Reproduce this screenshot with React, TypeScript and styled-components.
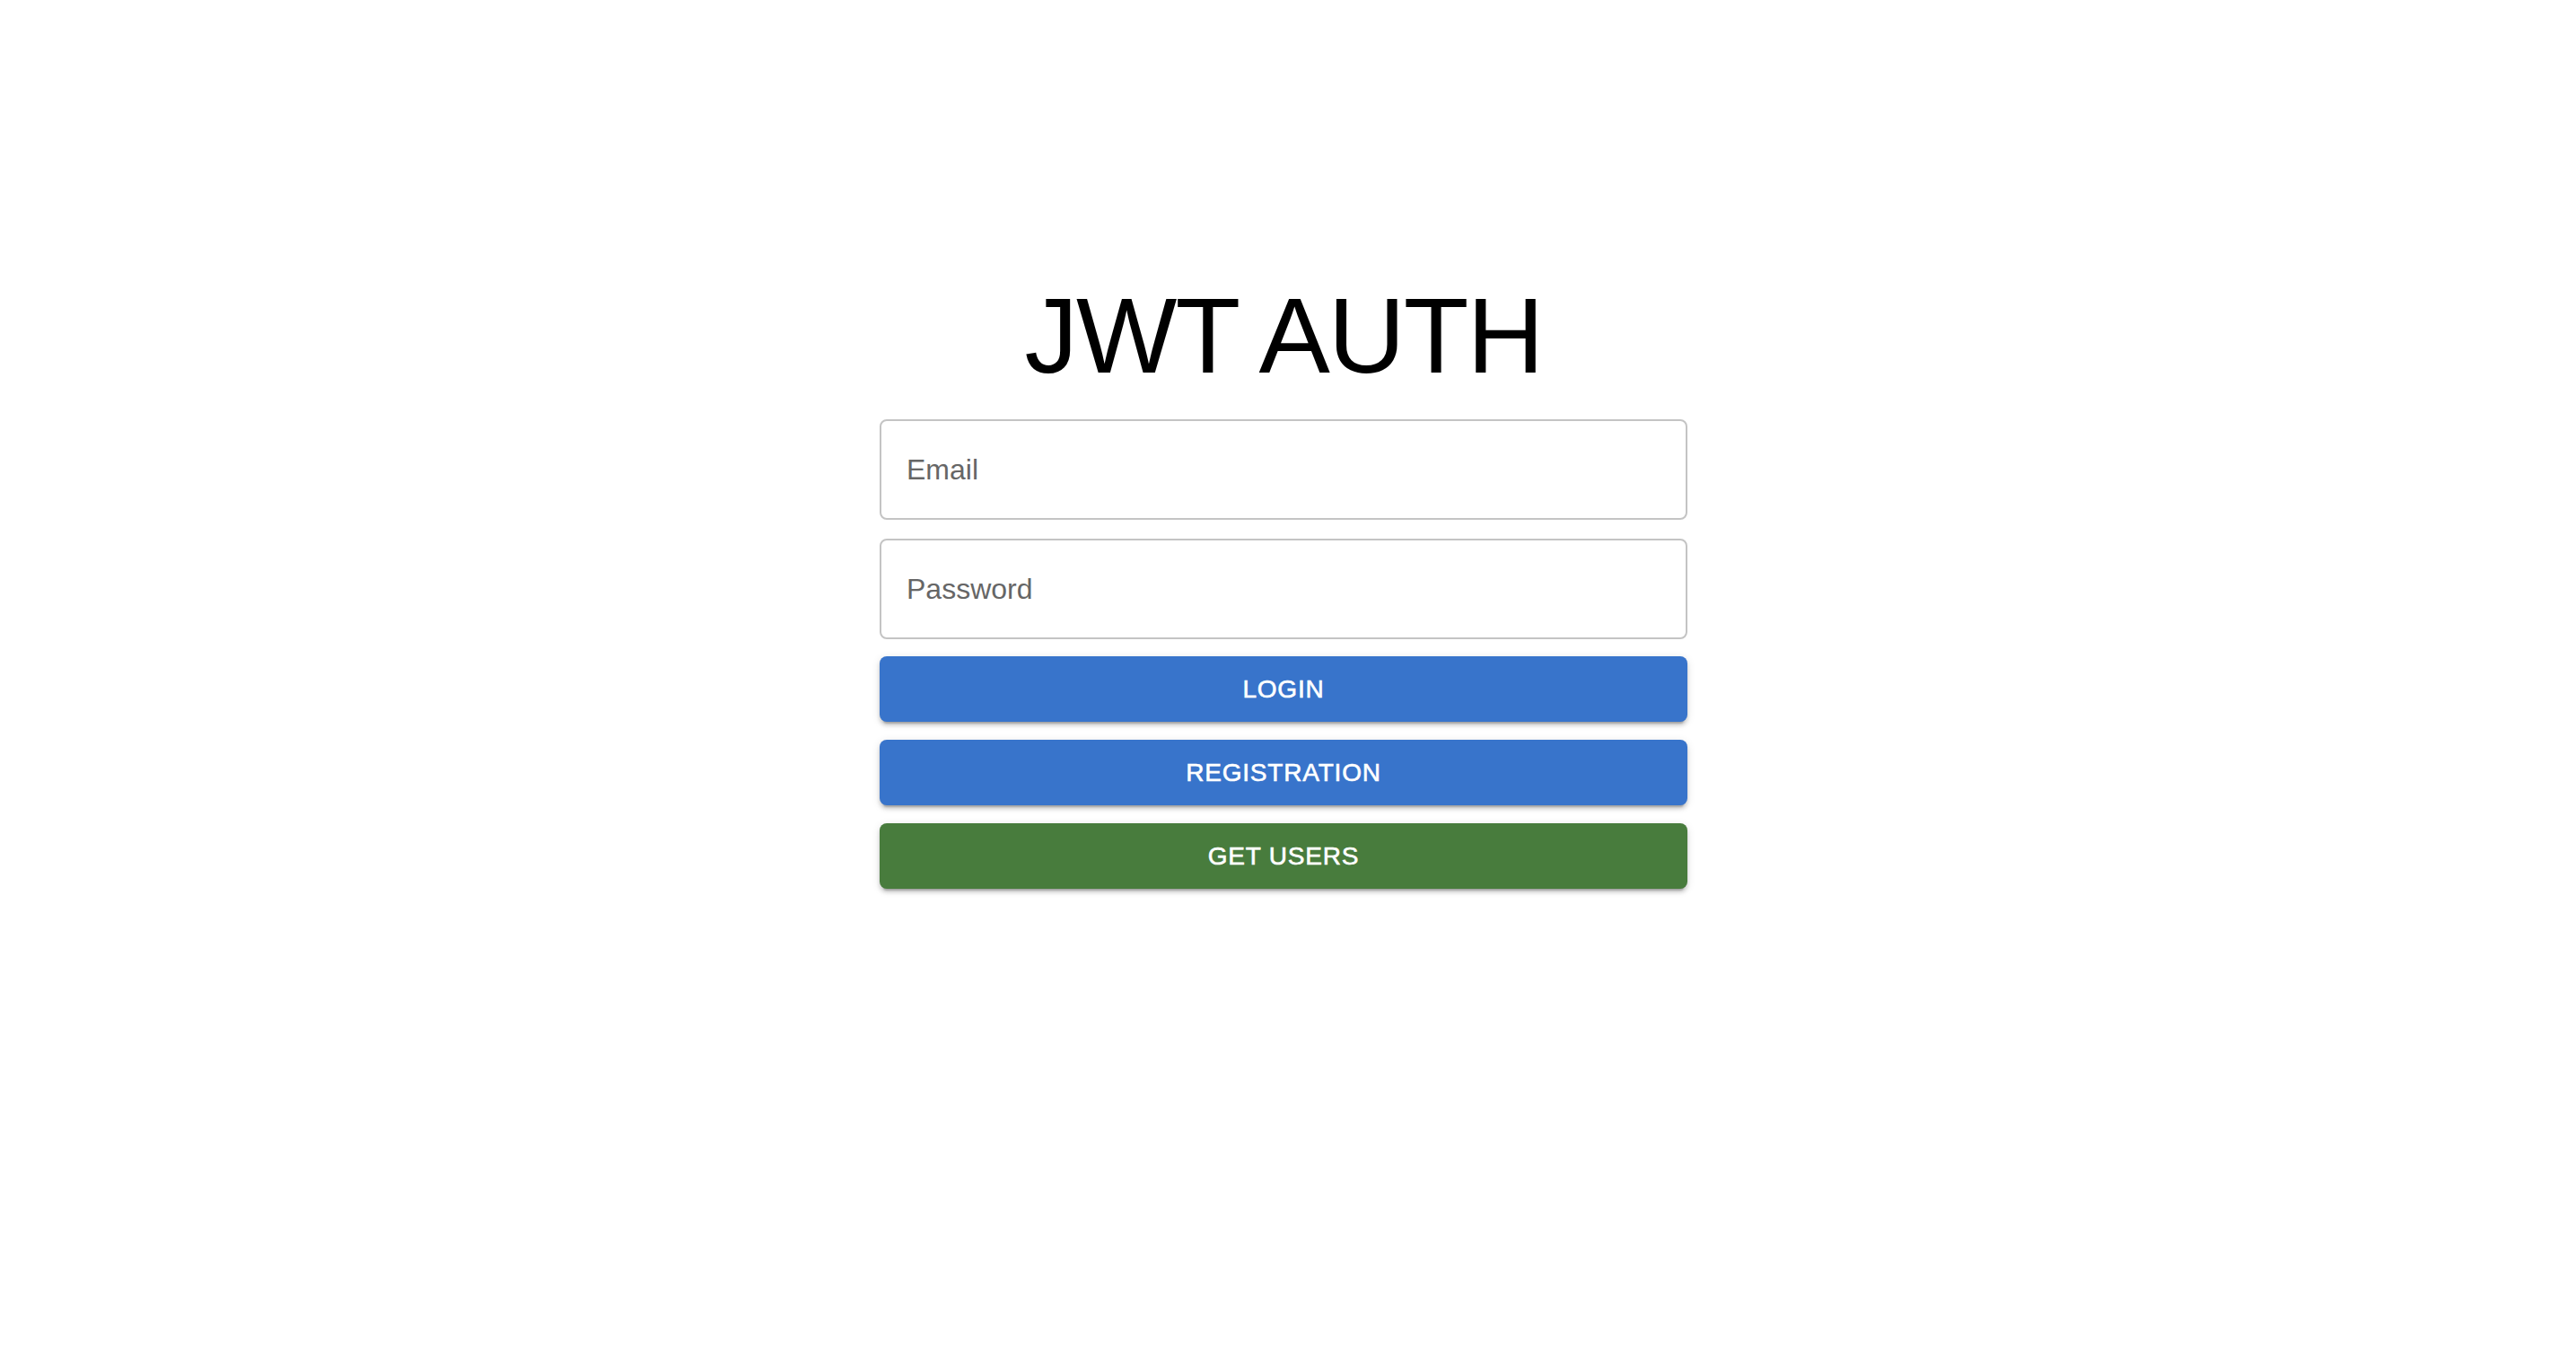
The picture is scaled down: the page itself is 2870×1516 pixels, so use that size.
import React from "react";
import styled, { createGlobalStyle } from "styled-components";

const GlobalStyle = createGlobalStyle`
  html, body {
    margin: 0;
    padding: 0;
    background: #ffffff;
    font-family: "Liberation Sans", Arial, Helvetica, sans-serif;
  }
`;

const Page = styled.main`
  min-height: 1516px;
  display: flex;
  justify-content: center;
  padding-top: 302px;
  box-sizing: border-box;
`;

const Column = styled.div`
  width: 900px;
  display: flex;
  flex-direction: column;
  transform: translateX(-5px);
`;

const Title = styled.h1`
  margin: 0 0 21px;
  font-size: 119px;
  line-height: 144px;
  font-weight: 400;
  letter-spacing: -2px;
  text-align: center;
  color: #000000;
`;

const FieldGroup = styled.div`
  display: flex;
  flex-direction: column;
  gap: 21px;
  margin-bottom: 19px;
`;

const Input = styled.input`
  height: 112px;
  box-sizing: border-box;
  border: 2px solid #c4c4c4;
  border-radius: 8px;
  padding: 0 28px;
  font-family: "Liberation Sans", Arial, Helvetica, sans-serif;
  font-size: 32px;
  color: #222;
  outline: none;
  background: #fff;

  &::placeholder {
    color: #666666;
    opacity: 1;
  }
`;

const ButtonGroup = styled.div`
  display: flex;
  flex-direction: column;
  gap: 20px;
`;

const Button = styled.button<{ $tone: "primary" | "success" }>`
  height: 73px;
  border: none;
  border-radius: 8px;
  background: ${(p) => (p.$tone === "primary" ? "#3874cb" : "#487c3d")};
  color: #ffffff;
  font-family: "Liberation Sans", Arial, Helvetica, sans-serif;
  font-size: 28px;
  font-weight: 500;
  letter-spacing: 0.8px;
  text-transform: uppercase;
  -webkit-text-stroke: 0.6px #ffffff;
  cursor: pointer;
  box-shadow: 0px 6px 2px -4px rgba(0, 0, 0, 0.2),
    0px 4px 4px 0px rgba(0, 0, 0, 0.14), 0px 2px 10px 0px rgba(0, 0, 0, 0.12);
`;

export default function App() {
  return (
    <>
      <GlobalStyle />
      <Page>
        <Column>
          <Title>JWT AUTH</Title>
          <FieldGroup>
            <Input type="text" placeholder="Email" />
            <Input type="password" placeholder="Password" />
          </FieldGroup>
          <ButtonGroup>
            <Button $tone="primary">Login</Button>
            <Button $tone="primary">Registration</Button>
            <Button $tone="success">Get users</Button>
          </ButtonGroup>
        </Column>
      </Page>
    </>
  );
}
